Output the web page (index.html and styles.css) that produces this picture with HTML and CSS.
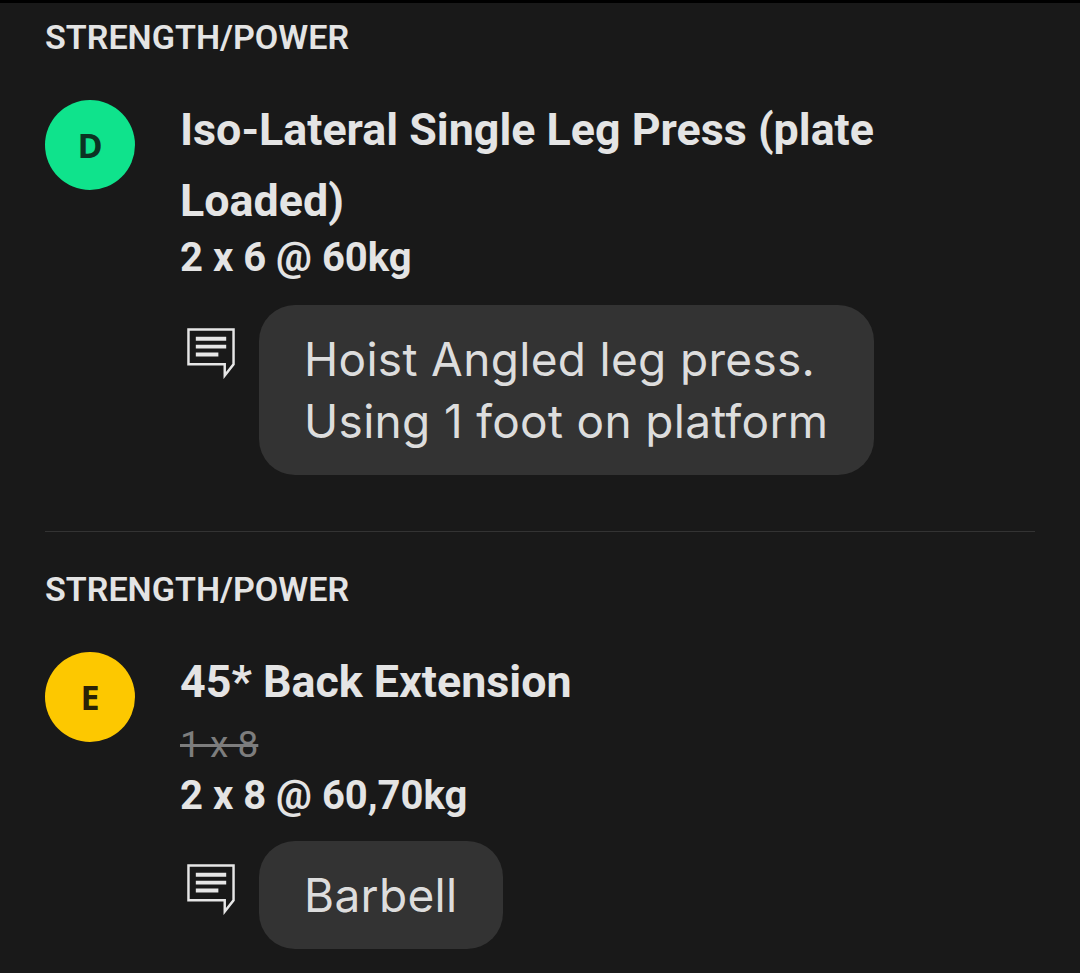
FILE: index.html
```html
<!DOCTYPE html>
<html lang="en">
<head>
<meta charset="UTF-8">
<meta name="viewport" content="width=device-width, initial-scale=1.0">
<title>Workout</title>
<link rel="stylesheet" href="styles.css">
</head>
<body>

<div class="workout">
    <section class="block block-first">
        <h3 class="block-title">STRENGTH/POWER</h3>
        <div class="exercise">
            <div class="badge badge-green">D</div>
            <div class="exercise-body">
                <div class="exercise-name">Iso-Lateral Single Leg Press (plate Loaded)</div>
                <div class="exercise-sets">2 x 6 @ 60kg</div>
                <div class="note">
                    <svg class="note-icon" viewBox="0 0 50 52" fill="none" stroke="#e6e6e6">
                        <path d="M1.5 2H47.5V37.5L38.5 49V37.5H1.5Z" stroke-width="2.5"/>
                        <path d="M9 11.5H40M9 19.5H40M9 27.5H32" stroke-width="4"/>
                    </svg>
                    <div class="note-bubble">Hoist Angled leg press.<br>Using 1 foot on platform</div>
                </div>
            </div>
        </div>
    </section>

    <section class="block">
        <h3 class="block-title">STRENGTH/POWER</h3>
        <div class="exercise">
            <div class="badge badge-yellow">E</div>
            <div class="exercise-body">
                <div class="exercise-name">45* Back Extension</div>
                <div class="exercise-old">1 x 8</div>
                <div class="exercise-sets exercise-sets-changed">2 x 8 @ 60,70kg</div>
                <div class="note">
                    <svg class="note-icon" viewBox="0 0 50 52" fill="none" stroke="#e6e6e6">
                        <path d="M1.5 2H47.5V37.5L38.5 49V37.5H1.5Z" stroke-width="2.5"/>
                        <path d="M9 11.5H40M9 19.5H40M9 27.5H32" stroke-width="4"/>
                    </svg>
                    <div class="note-bubble">Barbell</div>
                </div>
            </div>
        </div>
    </section>
</div>

</body>
</html>
```

FILE: styles.css
```css
html, body {
    height: 100%;
}
body {
    margin: 0;
    padding: 0;
    background-color: #191919;
    color: #e4e4e4;
    font-family: Roboto, "Liberation Sans", sans-serif;
    overflow: hidden;
}
.workout {
    border-top: 3px solid #000000;
    padding: 0 45px;
}
.block {
    padding-top: 39px;
}
.block-first {
    padding-top: 16px;
    padding-bottom: 56px;
    border-bottom: 1px solid #333333;
}
.block-title {
    margin: 0;
    font-size: 34.1px;
    line-height: 36px;
    font-weight: 600;
}
.exercise {
    display: flex;
    gap: 45px;
    margin-top: 45px;
}
.badge {
    flex: none;
    width: 90px;
    height: 90px;
    border-radius: 50%;
    display: flex;
    align-items: center;
    justify-content: center;
    color: #0c3323;
    font-family: "Open Sans", sans-serif;
    font-size: 34px;
    font-weight: 700;
}
.badge-green {
    background-color: #0fe38c;
}
.badge-yellow {
    background-color: #fdc800;
    color: #2a2206;
}
.exercise-body {
    width: 720px;
}
.exercise-name {
    font-size: 44.8px;
    line-height: 71px;
    font-weight: 700;
    margin-top: -6px;
}
.exercise-sets {
    font-size: 40px;
    line-height: 46px;
    font-weight: 700;
    margin-top: -1px;
}
.exercise-sets-changed {
    margin-bottom: -2px;
}
.exercise-old {
    font-size: 37px;
    line-height: 42px;
    color: #7d7d7d;
    text-decoration: line-through;
    margin-top: 7px;
    margin-bottom: 8px;
}
.note {
    display: flex;
    align-items: flex-start;
    gap: 23px;
    margin-top: 24px;
    margin-left: 7px;
}
.note-icon {
    flex: none;
    width: 49px;
    height: 52px;
    margin-top: 22px;
}
.note-bubble {
    background-color: #333333;
    border-radius: 36px;
    padding: 23px 46px 23px 45px;
    font-family: Inter, sans-serif;
    font-size: 46px;
    line-height: 62px;
    letter-spacing: 0.32px;
    color: #dddddd;
}
```
